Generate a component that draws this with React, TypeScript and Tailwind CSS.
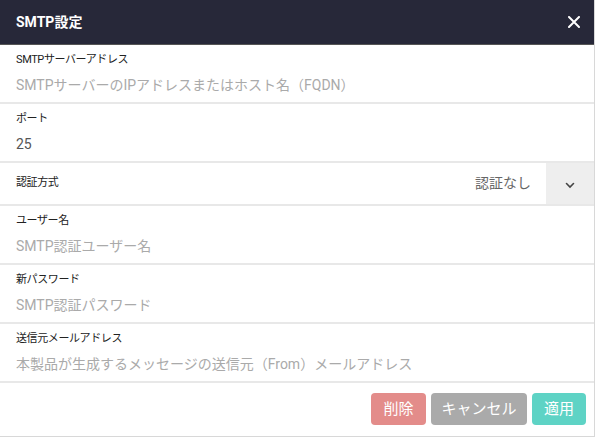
import React from "react";

const font = { fontFamily: '"Roboto", "Noto Sans CJK JP", sans-serif' };

function Field({ label, value, placeholder }: { label: string; value?: string; placeholder?: string }) {
  return (
    <div className="flex flex-col border-b-2 border-[#e8e8e8] px-4 pt-[7px] pb-[6px]">
      <div className="h-[16px] text-[11px] leading-[16px] tracking-[-0.4px] text-[#222]">{label}</div>
      <div className="mt-[6px] h-[22px] text-[14px] leading-[22px]">
        {value ? <span className="text-[#555]">{value}</span> : <span className="text-[#aaa]">{placeholder}</span>}
      </div>
    </div>
  );
}

export default function App() {
  return (
    <div className="h-[437px] w-[598px] bg-white" style={font}>
      <div className="flex h-[437px] w-[595px] flex-col border-r border-b border-[#d8d8d8]">
        <div className="flex h-[44px] shrink-0 items-center justify-between bg-[#272839] pl-4 pr-[14px]">
          <span className="text-[14px] font-bold text-white">SMTP設定</span>
          <svg width="12" height="12" viewBox="0 0 12 12">
            <path d="M1 1 L11 11 M11 1 L1 11" stroke="white" strokeWidth="2" strokeLinecap="round" />
          </svg>
        </div>
        <div className="h-[1px] bg-[#555]" />
        <Field label="SMTPサーバーアドレス" placeholder="SMTPサーバーのIPアドレスまたはホスト名（FQDN）" />
        <Field label="ポート" value="25" />
        <div className="flex h-[43px] items-stretch border-b-2 border-[#e8e8e8]">
          <div className="flex flex-1 items-center pl-4 text-[11px] tracking-[-0.4px] text-[#222]">認証方式</div>
          <div className="flex items-center pr-[15px] text-[14px] text-[#666]">認証なし</div>
          <div className="flex w-[48px] items-center justify-center bg-[#eeeeee]">
            <svg width="10" height="7" viewBox="0 0 10 7" className="mt-[4px]">
              <path d="M1.5 1.5 L5 5 L8.5 1.5" stroke="#444" strokeWidth="1.6" fill="none" strokeLinecap="round" />
            </svg>
          </div>
        </div>
        <Field label="ユーザー名" placeholder="SMTP認証ユーザー名" />
        <Field label="新パスワード" placeholder="SMTP認証パスワード" />
        <Field label="送信元メールアドレス" placeholder="本製品が生成するメッセージの送信元（From）メールアドレス" />
        <div className="flex flex-1 items-start justify-end gap-[5px] pr-[8px] pt-[10px]">
          <button className="h-[32px] w-[55px] rounded-[4px] bg-[#e38c8a] text-[15px] text-white">削除</button>
          <button className="h-[32px] w-[96px] rounded-[4px] bg-[#aaaaaa] text-[15px] text-white">キャンセル</button>
          <button className="h-[32px] w-[54px] rounded-[4px] bg-[#5ed3c5] text-[15px] text-white">適用</button>
        </div>
      </div>
    </div>
  );
}
